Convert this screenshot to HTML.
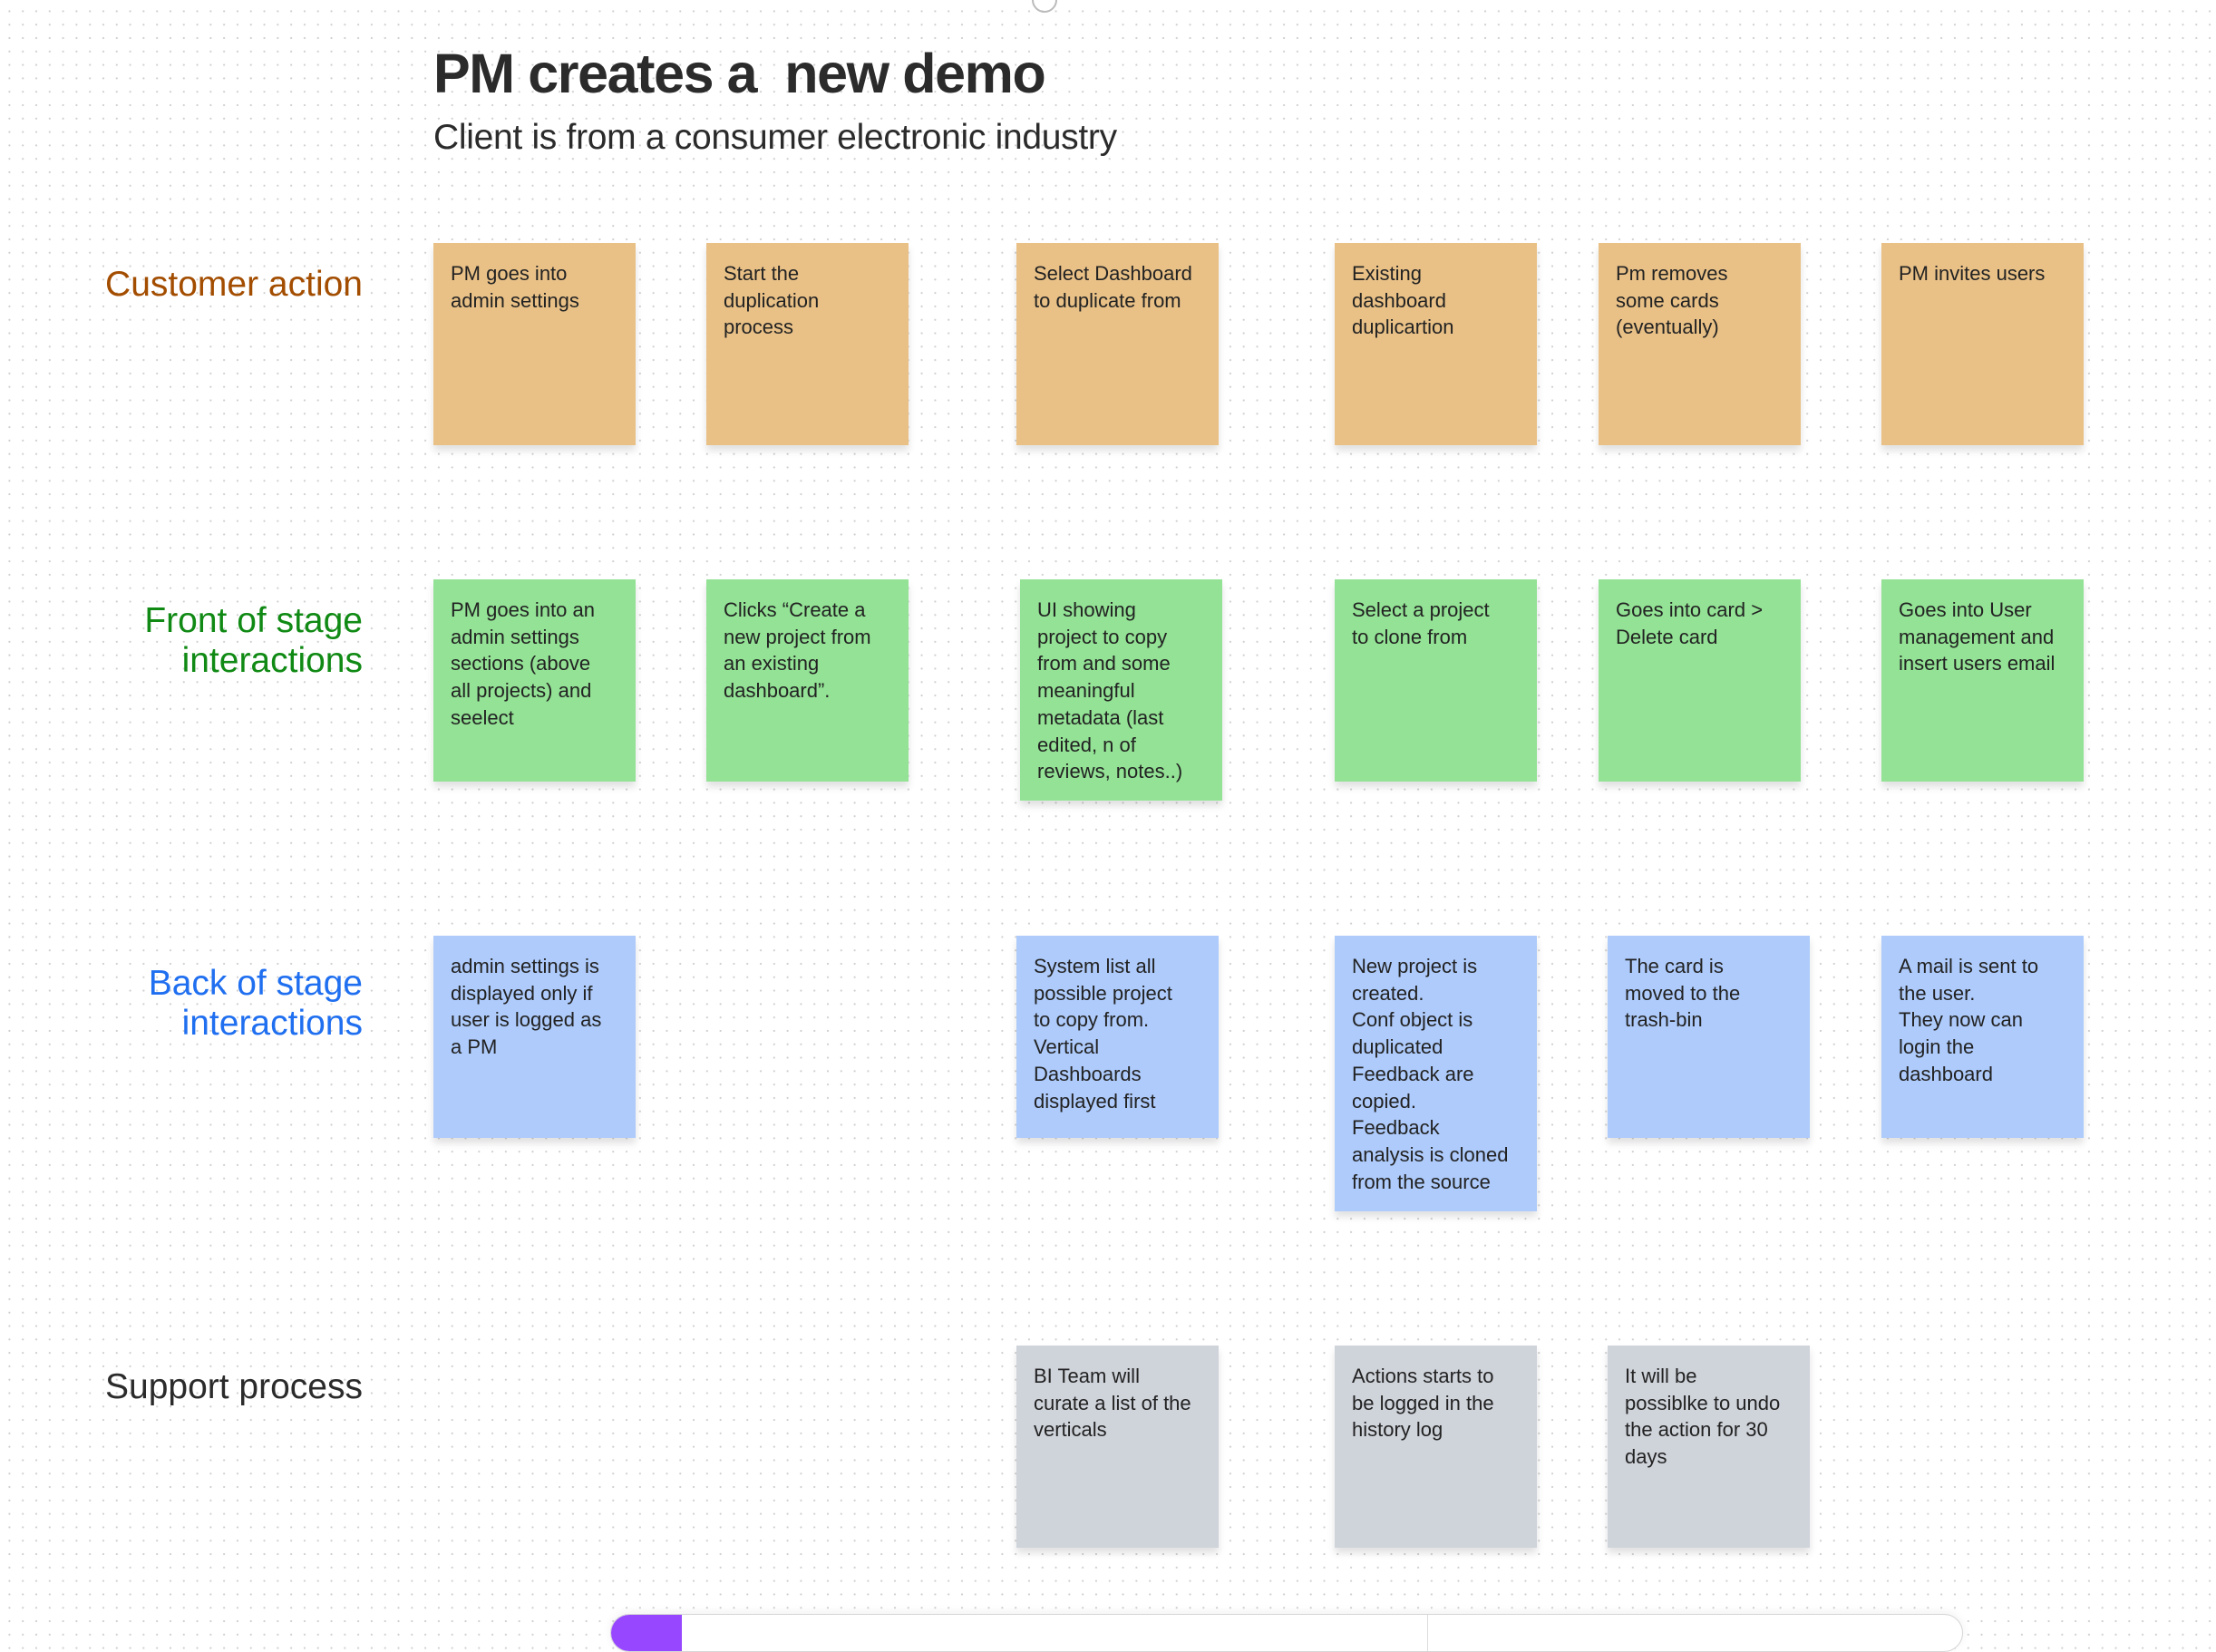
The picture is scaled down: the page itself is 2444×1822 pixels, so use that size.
<!DOCTYPE html>
<html><head><meta charset="utf-8"><style>
html,body{margin:0;padding:0}
body{width:2444px;height:1794px;overflow:hidden;position:relative;background-color:#fff;
background-image:radial-gradient(circle,#cfcfcf 0.9px,transparent 1.3px);background-size:14.8px 14.8px;background-position:3px 5px;
font-family:"Liberation Sans",sans-serif;color:#222}
.t{position:absolute;left:478px;top:46px;font-size:61px;font-weight:bold;color:#2b2b2b;letter-spacing:-1.4px;white-space:pre}
.st{position:absolute;left:478px;top:130px;font-size:39px;color:#2b2b2b;letter-spacing:-0.3px}
.lb{position:absolute;right:2044px;text-align:right;font-size:39px;line-height:44px;white-space:nowrap}
.s{position:absolute;width:223px;height:223px;box-sizing:border-box;padding:19px 18px 0 19px;font-size:22px;line-height:29.7px;color:#222;box-shadow:0 6px 8px rgba(0,0,0,0.12)}
.o{background:#e9c187}.g{background:#93e295}.b{background:#aecbfb}.y{background:#cfd3da}
</style></head><body>
<div style="position:absolute;left:1138px;top:-14px;width:24px;height:24px;border:2px solid #bbb;border-radius:50%"></div>
<div class="t">PM creates a  new demo</div>
<div class="st">Client is from a consumer electronic industry</div>

<div class="lb" style="top:292px;color:#a34d00">Customer action</div>
<div class="lb" style="top:663px;color:#108a14">Front of stage<br>interactions</div>
<div class="lb" style="top:1063px;color:#1f6ff0">Back of stage<br>interactions</div>
<div class="lb" style="top:1508px;color:#2b2b2b">Support process</div>

<div class="s o" style="left:478px;top:268px">PM goes into<br>admin settings</div>
<div class="s o" style="left:779px;top:268px">Start the<br>duplication<br>process</div>
<div class="s o" style="left:1121px;top:268px">Select Dashboard<br>to duplicate from</div>
<div class="s o" style="left:1472px;top:268px">Existing<br>dashboard<br>duplicartion</div>
<div class="s o" style="left:1763px;top:268px">Pm removes<br>some cards<br>(eventually)</div>
<div class="s o" style="left:2075px;top:268px">PM invites users</div>

<div class="s g" style="left:478px;top:639px">PM goes into an<br>admin settings<br>sections (above<br>all projects) and<br>seelect</div>
<div class="s g" style="left:779px;top:639px">Clicks “Create a<br>new project from<br>an existing<br>dashboard”.</div>
<div class="s g" style="left:1125px;top:639px;height:244px">UI showing<br>project to copy<br>from and some<br>meaningful<br>metadata (last<br>edited, n of<br>reviews, notes..)</div>
<div class="s g" style="left:1472px;top:639px">Select a project<br>to clone from</div>
<div class="s g" style="left:1763px;top:639px">Goes into card &gt;<br>Delete card</div>
<div class="s g" style="left:2075px;top:639px">Goes into User<br>management and<br>insert users email</div>

<div class="s b" style="left:478px;top:1032px">admin settings is<br>displayed only if<br>user is logged as<br>a PM</div>
<div class="s b" style="left:1121px;top:1032px">System list all<br>possible project<br>to copy from.<br>Vertical<br>Dashboards<br>displayed first</div>
<div class="s b" style="left:1472px;top:1032px;height:304px">New project is<br>created.<br>Conf object is<br>duplicated<br>Feedback are<br>copied.<br>Feedback<br>analysis is cloned<br>from the source</div>
<div class="s b" style="left:1773px;top:1032px">The card is<br>moved to the<br>trash-bin</div>
<div class="s b" style="left:2075px;top:1032px">A mail is sent to<br>the user.<br>They now can<br>login the<br>dashboard</div>

<div class="s y" style="left:1121px;top:1484px">BI Team will<br>curate a list of the<br>verticals</div>
<div class="s y" style="left:1472px;top:1484px">Actions starts to<br>be logged in the<br>history log</div>
<div class="s y" style="left:1773px;top:1484px">It will be<br>possiblke to undo<br>the action for 30<br>days</div>

<div style="position:absolute;left:673px;top:1780px;width:1490px;height:40px;background:#fff;border:1px solid #d6d6d6;border-radius:22px;box-shadow:0 -2px 10px rgba(0,0,0,0.06);overflow:hidden">
<div style="position:absolute;left:0;top:0;width:78px;height:40px;background:#9747ff"></div>
<div style="position:absolute;left:900px;top:0;width:1px;height:40px;background:#ddd"></div>
</div>
</body></html>
